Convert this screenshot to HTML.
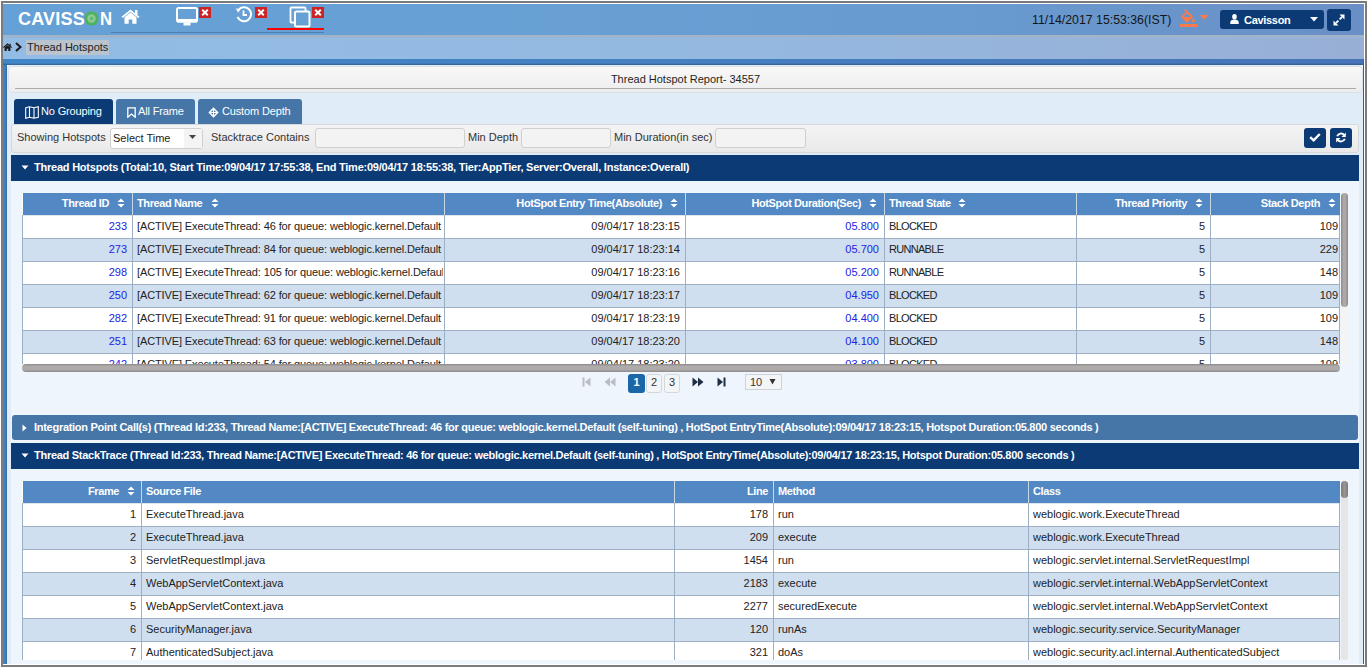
<!DOCTYPE html>
<html><head><meta charset="utf-8">
<style>
*{box-sizing:border-box;margin:0;padding:0}
html,body{width:1367px;height:667px;overflow:hidden;background:#fff;font-family:"Liberation Sans",sans-serif;font-size:11px;color:#222;position:relative}
div,span{position:absolute}
.t{white-space:nowrap}
/* frame */
#fr{left:1px;top:1px;width:1366px;height:666px;border:2px solid #7c7c7c;border-top-color:#7a7a7a}
#hdr{left:3px;top:4px;width:1361px;height:31px;background:linear-gradient(90deg,#65a0d6 0%,#68a0d4 40%,#689bd0 70%,#6a8fc6 100%)}
#hl{left:111px;top:32px;width:213px;height:1px;background:#4d7fb2}
#bct{left:3px;top:35px;width:1361px;height:3px;background:linear-gradient(#a6b3c0,#98b6d8)}
#bc{left:3px;top:38px;width:1361px;height:21px;background:linear-gradient(90deg,#92bce5 0%,#94b9e1 50%,#98afd5 100%)}
#strip{left:3px;top:59px;width:1361px;height:6px;background:linear-gradient(transparent 0,transparent 4px,rgba(40,70,100,.6) 6px),linear-gradient(90deg,#3f86c9,#4580c2 50%,#4774b8)}
#lb{left:3px;top:65px;width:4px;height:599px;background:linear-gradient(90deg,#4a86c4 0,#3f7fc0 60%,#34679c 100%)}
#rb{left:1363px;top:59px;width:1px;height:605px;background:#3a5f8f}
#panel{left:7px;top:65px;width:1356px;height:599px;background:#e0ecf8;border-radius:3px 3px 0 0}
#inner{left:11px;top:181px;width:1348px;height:483px;background:#eff5fd}
#ttl{left:9px;top:67px;width:1353px;height:25px;background:linear-gradient(#f8f8f8,#ededed);border-radius:4px;box-shadow:0 0 0 1px #d9e2ea}
#ttl .line{left:6px;top:21px;width:1341px;height:1px;background:#ababab}
#ttl .t{left:3px;width:1347px;top:6px;text-align:center;color:#1f1f1f}
/* tabs */
.tab{top:99px;height:25px;background:#4676a8;color:#fff;border-radius:3px 3px 0 0;font-size:11px;letter-spacing:-0.15px}
.tab .t{top:6px}
/* filter */
#flt{left:11px;top:124px;width:1348px;height:29px;background:linear-gradient(#f4f4f4,#e9e9e9);border:1px solid #d4d8dc;border-radius:3px}
.lbl{top:131px;color:#333}
.inp{top:128px;height:20px;background:#f3f3f3;border:1px solid #cfcfcf;border-radius:3px}
.btn{top:128px;width:22px;height:20px;background:#0b3a75;border-radius:3px}
/* section bars */
.sec{left:11px;width:1348px;height:26px;background:#0b3a75;color:#fff;font-weight:bold;font-size:11px;letter-spacing:-0.28px}
.sec .t{left:23px;top:6px}
.tri{width:0;height:0}
/* tables */
.hd{height:22px;background:#5288c3;color:#fff;font-weight:bold;letter-spacing:-0.35px}
.hd .t{top:4px}
.row{height:23px;left:23px;border-bottom:1px solid #9fb1c4}
.ev{background:#fff}
.od{background:#cfdff0}
.vl{width:1px;background:#9fb1c4}
.lnk{color:#2a2ad6}
.c .t{top:5px}
.ht{color:#fff;font-weight:bold;letter-spacing:-0.4px}
</style></head>
<body>
<div id="fr"></div>
<div id="hdr"></div>
<div id="hl"></div>
<div id="bct"></div>
<div id="bc"></div>
<div id="strip"></div>
<div id="panel"></div>
<div id="lb"></div>
<div id="rb"></div>
<div id="inner"></div>

<!-- header content -->
<div class="t" style="left:18px;top:9px;font-size:19px;font-weight:bold;color:#fff;letter-spacing:0.2px;line-height:19px;transform:scaleX(0.95);transform-origin:0 0">CAVISS</div>
<div class="t" style="left:100px;top:9px;font-size:19px;font-weight:bold;color:#fff;line-height:19px;transform:scaleX(0.88);transform-origin:0 0">N</div>
<svg style="position:absolute;left:84px;top:11px" width="15" height="15" viewBox="0 0 15 15"><circle cx="7.5" cy="7.5" r="7" fill="#4cb35b"/><circle cx="7.5" cy="7.5" r="4.2" fill="#8ccb95"/><path d="M7.5 5.3 L9.7 7.5 L7.5 9.7 L5.3 7.5Z" fill="#5dbb6a"/></svg>
<!-- home -->
<svg style="position:absolute;left:121px;top:9px" width="19" height="15" viewBox="0 0 19 15"><path d="M0.5 7.8 L9.5 0.5 L14 4.2 L14 1 L16.5 1 L16.5 6.2 L18.5 7.8 L17.3 9 L9.5 2.7 L1.7 9Z" fill="#fff"/><path d="M3.5 8.3 L9.5 3.6 L15.5 8.3 L15.5 14.7 L11.3 14.7 L11.3 10.5 L7.7 10.5 L7.7 14.7 L3.5 14.7Z" fill="#fff"/></svg>
<!-- monitor -->
<svg style="position:absolute;left:176px;top:7px" width="23" height="19" viewBox="0 0 23 19"><rect x="1" y="1" width="20" height="13.5" rx="1.5" fill="none" stroke="#fff" stroke-width="2"/><rect x="1" y="12" width="20" height="3.5" fill="#fff"/><rect x="7.5" y="15.5" width="7" height="3" fill="#fff"/></svg>
<div style="left:199px;top:7px;width:12px;height:11px;background:#cc2424"></div>
<svg style="position:absolute;left:199px;top:7px" width="12" height="11" viewBox="0 0 12 11"><path d="M3.2 2.7 L8.8 8.3 M8.8 2.7 L3.2 8.3" stroke="#fff" stroke-width="2"/></svg>
<!-- history -->
<svg style="position:absolute;left:235px;top:6px" width="18" height="17" viewBox="0 0 18 17"><path d="M3.2 4.5 A7 7 0 1 1 2.6 11" fill="none" stroke="#fff" stroke-width="2"/><path d="M0.8 2.5 L5.5 3 L3.2 6.8Z" fill="#fff"/><path d="M8.5 4.5 L8.5 9 L12 9" fill="none" stroke="#fff" stroke-width="1.8"/></svg>
<div style="left:255px;top:7px;width:12px;height:11px;background:#cc2424"></div>
<svg style="position:absolute;left:255px;top:7px" width="12" height="11" viewBox="0 0 12 11"><path d="M3.2 2.7 L8.8 8.3 M8.8 2.7 L3.2 8.3" stroke="#fff" stroke-width="2"/></svg>
<!-- copy -->
<svg style="position:absolute;left:289px;top:6px" width="23" height="22" viewBox="0 0 23 22"><path d="M5 16.5 L2.5 16.5 Q1.5 16.5 1.5 15.5 L1.5 2.5 Q1.5 1.5 2.5 1.5 L15.5 1.5 Q16.5 1.5 16.5 2.5 L16.5 5" fill="none" stroke="#fff" stroke-width="1.8"/><rect x="6" y="5.5" width="14.5" height="15" rx="1.5" fill="none" stroke="#fff" stroke-width="2"/></svg>
<div style="left:312px;top:7px;width:12px;height:11px;background:#cc2424"></div>
<svg style="position:absolute;left:312px;top:7px" width="12" height="11" viewBox="0 0 12 11"><path d="M3.2 2.7 L8.8 8.3 M8.8 2.7 L3.2 8.3" stroke="#fff" stroke-width="2"/></svg>
<div style="left:267px;top:28px;width:57px;height:2px;background:#f00"></div>
<!-- date -->
<div class="t" style="left:1032px;top:13px;font-size:12.3px;color:#151515">11/14/2017 15:53:36(IST)</div>
<!-- paint -->
<svg style="position:absolute;left:1179px;top:9px" width="31" height="19" viewBox="0 0 31 19"><path d="M2.9 7.9 L7.7 3.1 L13 7.9 L7.7 12.8 Z" fill="none" stroke="#fb7a48" stroke-width="1.5" stroke-linejoin="miter"/><path d="M2.9 7.9 L13 7.9 L7.7 12.8Z" fill="#fb7a48"/><path d="M5.6 1.8 L6.4 1 L13.2 7.8" fill="none" stroke="#fb7a48" stroke-width="1.4"/><path d="M14.4 9.3 Q16 11 16 11.8 A1.6 1.6 0 0 1 12.8 11.8 Q12.8 11 14.4 9.3Z" fill="#fb7a48"/><rect x="1" y="15" width="17.5" height="3" fill="#fb7a48"/><path d="M21 6 L29.5 6 L25.2 10.8Z" fill="#fb7a48"/></svg>
<!-- user btn -->
<div style="left:1220px;top:10px;width:104px;height:19px;background:#0b3a75;border-radius:3px"></div>
<svg style="position:absolute;left:1230px;top:14px" width="9" height="10" viewBox="0 0 9 10"><ellipse cx="4.5" cy="2.8" rx="2.3" ry="2.8" fill="#fff"/><path d="M0.3 10 L0.3 8 Q0.5 5.9 2.8 5.7 L6.2 5.7 Q8.5 5.9 8.7 8 L8.7 10Z" fill="#fff"/></svg>
<div class="t" style="left:1244px;top:14px;font-weight:bold;color:#fff;letter-spacing:-0.3px;font-size:11px">Cavisson</div>
<svg style="position:absolute;left:1310px;top:17px" width="8" height="5" viewBox="0 0 8 5"><path d="M0 0 L8 0 L4 4.5Z" fill="#fff"/></svg>
<div style="left:1327px;top:9px;width:24px;height:22px;background:#0b3a75;border-radius:3px"></div>
<svg style="position:absolute;left:1333px;top:14px" width="12" height="12" viewBox="0 0 12 12"><path d="M6.5 0.5 L11.5 0.5 L11.5 5.5 Z M0.5 6.5 L0.5 11.5 L5.5 11.5Z" fill="#fff"/><path d="M9 3 L6.6 5.4 M5.4 6.6 L3 9" stroke="#fff" stroke-width="1.8"/></svg>
<!-- breadcrumb icons -->
<svg style="position:absolute;left:3px;top:43px" width="9" height="8" viewBox="0 0 9 8"><path d="M0 4.2 L4.5 0.3 L6.5 2 L6.5 0.7 L7.7 0.7 L7.7 3 L9 4.2 L8.3 4.9 L4.5 1.7 L0.7 4.9Z M1.6 4.5 L4.5 2.2 L7.4 4.5 L7.4 8 L5.3 8 L5.3 5.8 L3.7 5.8 L3.7 8 L1.6 8Z" fill="#1a1a1a"/></svg>
<svg style="position:absolute;left:15px;top:42px" width="7" height="10" viewBox="0 0 7 10"><path d="M1 1 L5.5 5 L1 9" fill="none" stroke="#1a1a1a" stroke-width="2"/></svg>
<!-- title -->
<div id="ttl"><div class="line"></div><div class="t">Thread Hotspot Report- 34557</div></div>

<!-- breadcrumb -->
<div style="left:26px;top:40px;width:83px;height:15px;background:#b9c4cf"></div>
<div class="t" style="left:27px;top:41px;color:#222">Thread Hotspots</div>

<!-- tabs -->
<div class="tab" style="left:14px;width:99px;background:#0b3a75"><span class="t" style="left:27px">No Grouping</span><svg style="position:absolute;left:11px;top:7px" width="14" height="13" viewBox="0 0 14 13"><path d="M0.7 1.8 L4.5 0.7 L9 1.8 L13.3 0.7 L13.3 11.2 L9 12.3 L4.5 11.2 L0.7 12.3Z M4.5 0.7 L4.5 11.2 M9 1.8 L9 12.3" fill="none" stroke="#fff" stroke-width="1.1"/></svg></div>
<div class="tab" style="left:116px;width:79px"><span class="t" style="left:22px">All Frame</span><svg style="position:absolute;left:11px;top:8px" width="9" height="11" viewBox="0 0 9 11"><path d="M0.8 0.8 L8.2 0.8 L8.2 10.2 L4.5 7 L0.8 10.2Z" fill="none" stroke="#fff" stroke-width="1.3" stroke-linejoin="miter"/></svg></div>
<div class="tab" style="left:198px;width:104px"><span class="t" style="left:24px">Custom Depth</span><svg style="position:absolute;left:10px;top:8px" width="11" height="11" viewBox="0 0 11 11"><path d="M5.5 0.3 L10.7 5.5 L5.5 10.7 L0.3 5.5Z" fill="#fff"/><circle cx="5.5" cy="5.5" r="2.3" fill="#4676a8"/><path d="M5.5 1.5 V9.5 M1.5 5.5 H9.5" stroke="#fff" stroke-width="1"/></svg></div>

<!-- filter -->
<div id="flt"></div>
<div class="lbl t" style="left:17px">Showing Hotspots</div>
<div class="inp" style="left:110px;width:93px;height:21px;background:#fff"></div>
<div style="left:184px;top:129px;width:18px;height:19px;background:#f4f4f4"></div><div class="t" style="left:113px;top:132px;color:#222">Select Time</div><svg style="position:absolute;left:189px;top:135px" width="7" height="4" viewBox="0 0 7 4"><path d="M0 0 L7 0 L3.5 4Z" fill="#444"/></svg>
<div class="lbl t" style="left:211px">Stacktrace Contains</div>
<div class="inp" style="left:315px;width:150px"></div>
<div class="lbl t" style="left:468px">Min Depth</div>
<div class="inp" style="left:521px;width:90px"></div>
<div class="lbl t" style="left:614px">Min Duration(in sec)</div>
<div class="inp" style="left:715px;width:91px"></div>
<div class="btn" style="left:1304px"></div><svg style="position:absolute;left:1309px;top:133px" width="12" height="9" viewBox="0 0 12 9"><path d="M1.2 4.2 L4.6 7.3 L10.8 1" fill="none" stroke="#fff" stroke-width="2.4"/></svg>
<div class="btn" style="left:1330px"></div><svg style="position:absolute;left:1335px;top:132px" width="12" height="11" viewBox="0 0 12 11"><path d="M2.2 4.3 A4 4 0 0 1 9.3 3.3" fill="none" stroke="#fff" stroke-width="1.9"/><path d="M10.8 0.5 L10.8 5 L6.5 5Z" fill="#fff"/><path d="M9.8 6.7 A4 4 0 0 1 2.7 7.7" fill="none" stroke="#fff" stroke-width="1.9"/><path d="M1.2 10.5 L1.2 6 L5.5 6Z" fill="#fff"/></svg>

<!-- section 1 -->
<div class="sec" style="top:155px;letter-spacing:-0.225px"><svg style="position:absolute;left:10px;top:10px" width="8" height="5" viewBox="0 0 8 5"><path d="M0.5 0.5 L7.5 0.5 L4 4.5Z" fill="#fff"/></svg><span class="t">Thread Hotspots (Total:10, Start Time:09/04/17 17:55:38, End Time:09/04/17 18:55:38, Tier:AppTier, Server:Overall, Instance:Overall)</span></div>

<!-- pagination -->
<svg style="position:absolute;left:582px;top:377px" width="9" height="10" viewBox="0 0 9 10"><rect x="0.5" y="0.5" width="2" height="9" fill="#b9bec4"/><path d="M8.5 0.5 L3 5 L8.5 9.5Z" fill="#b9bec4"/></svg>
<svg style="position:absolute;left:604px;top:377px" width="12" height="10" viewBox="0 0 12 10"><path d="M6 0.5 L0.5 5 L6 9.5Z M11.5 0.5 L6 5 L11.5 9.5Z" fill="#b9bec4"/></svg>
<div style="left:628px;top:374px;width:17px;height:19px;background:#1b66a6;border-radius:3px"></div>
<div class="t" style="left:628px;top:376px;width:17px;text-align:center;color:#fff;font-size:11px;font-weight:bold">1</div>
<div style="left:646px;top:374px;width:16px;height:19px;background:#f4f5f7;border:1px solid #d4d8dd;border-radius:3px"></div>
<div class="t" style="left:646px;top:376px;width:16px;text-align:center;color:#333;font-size:11px">2</div>
<div style="left:664px;top:374px;width:16px;height:19px;background:#f4f5f7;border:1px solid #d4d8dd;border-radius:3px"></div>
<div class="t" style="left:664px;top:376px;width:16px;text-align:center;color:#333;font-size:11px">3</div>
<svg style="position:absolute;left:692px;top:377px" width="12" height="10" viewBox="0 0 12 10"><path d="M0.5 0.5 L6 5 L0.5 9.5Z M6 0.5 L11.5 5 L6 9.5Z" fill="#1e2e44"/></svg>
<svg style="position:absolute;left:717px;top:377px" width="9" height="10" viewBox="0 0 9 10"><path d="M0.5 0.5 L6 5 L0.5 9.5Z" fill="#1e2e44"/><rect x="6.5" y="0.5" width="2" height="9" fill="#1e2e44"/></svg>
<div style="left:745px;top:374px;width:37px;height:16px;background:#f4f5f7;border:1px solid #cfd3d8"></div>
<div class="t" style="left:750px;top:376px;color:#333;font-size:11px">10</div>
<svg style="position:absolute;left:769px;top:379px" width="7" height="6" viewBox="0 0 7 6"><path d="M0.5 0 L6.5 0 L3.5 5.5Z" fill="#333"/></svg>
<!-- section 2/3 -->
<div class="sec" style="top:415px;left:12px;width:1346px;height:25px;background:#4676a8;border-radius:3px"><svg style="position:absolute;left:10px;top:9px" width="5" height="8" viewBox="0 0 5 8"><path d="M0.5 0.5 L4.5 4 L0.5 7.5Z" fill="#fff"/></svg><span class="t" style="left:22px">Integration Point Call(s) (Thread Id:233, Thread Name:[ACTIVE] ExecuteThread: 46 for queue: weblogic.kernel.Default (self-tuning) , HotSpot EntryTime(Absolute):09/04/17 18:23:15, Hotspot Duration:05.800 seconds )</span></div>
<div class="sec" style="top:443px"><svg style="position:absolute;left:10px;top:10px" width="8" height="5" viewBox="0 0 8 5"><path d="M0.5 0.5 L7.5 0.5 L4 4.5Z" fill="#fff"/></svg><span class="t">Thread StackTrace (Thread Id:233, Thread Name:[ACTIVE] ExecuteThread: 46 for queue: weblogic.kernel.Default (self-tuning) , HotSpot EntryTime(Absolute):09/04/17 18:23:15, Hotspot Duration:05.800 seconds )</span></div>

<!-- table1 -->
<div style="left:22px;top:193px;width:1318px;height:171px;overflow:hidden;background:#fff">
<div class="hd" style="left:1px;top:0;width:1317px"></div>
<div class="t ht" style="right:1231px;top:4px">Thread ID</div>
<div class="t ht" style="left:115px;top:4px">Thread Name</div>
<div class="t ht" style="right:678px;top:4px">HotSpot Entry Time(Absolute)</div>
<div class="t ht" style="right:479px;top:4px">HotSpot Duration(Sec)</div>
<div class="t ht" style="left:867px;top:4px">Thread State</div>
<div class="t ht" style="right:153px;top:4px">Thread Priority</div>
<div class="t ht" style="right:20px;top:4px">Stack Depth</div>
<div style="left:110px;top:0;width:1px;height:22px;background:#c9d6e3"></div>
<div style="left:422px;top:0;width:1px;height:22px;background:#c9d6e3"></div>
<div style="left:663px;top:0;width:1px;height:22px;background:#c9d6e3"></div>
<div style="left:862px;top:0;width:1px;height:22px;background:#c9d6e3"></div>
<div style="left:1054px;top:0;width:1px;height:22px;background:#c9d6e3"></div>
<div style="left:1188px;top:0;width:1px;height:22px;background:#c9d6e3"></div>
<svg style="position:absolute;left:95px;top:5px" width="8" height="10" viewBox="0 0 8 10"><path d="M0.5 4 L4 0.5 L7.5 4 Z M0.5 6 L4 9.5 L7.5 6 Z" fill="#fff"/></svg>
<svg style="position:absolute;left:189px;top:5px" width="8" height="10" viewBox="0 0 8 10"><path d="M0.5 4 L4 0.5 L7.5 4 Z M0.5 6 L4 9.5 L7.5 6 Z" fill="#fff"/></svg>
<svg style="position:absolute;left:648px;top:5px" width="8" height="10" viewBox="0 0 8 10"><path d="M0.5 4 L4 0.5 L7.5 4 Z M0.5 6 L4 9.5 L7.5 6 Z" fill="#fff"/></svg>
<svg style="position:absolute;left:847px;top:5px" width="8" height="10" viewBox="0 0 8 10"><path d="M0.5 4 L4 0.5 L7.5 4 Z M0.5 6 L4 9.5 L7.5 6 Z" fill="#fff"/></svg>
<svg style="position:absolute;left:936px;top:5px" width="8" height="10" viewBox="0 0 8 10"><path d="M0.5 4 L4 0.5 L7.5 4 Z M0.5 6 L4 9.5 L7.5 6 Z" fill="#fff"/></svg>
<svg style="position:absolute;left:1173px;top:5px" width="8" height="10" viewBox="0 0 8 10"><path d="M0.5 4 L4 0.5 L7.5 4 Z M0.5 6 L4 9.5 L7.5 6 Z" fill="#fff"/></svg>
<svg style="position:absolute;left:1306px;top:5px" width="8" height="10" viewBox="0 0 8 10"><path d="M0.5 4 L4 0.5 L7.5 4 Z M0.5 6 L4 9.5 L7.5 6 Z" fill="#fff"/></svg>
<div style="left:0;top:22px;width:1318px;height:1px;background:#dfe6ee"></div>
<div style="left:0;top:23px;width:1318px;height:23px;background:#ffffff;border-bottom:1px solid #9db0c3"></div>
<div class="t" style="left:1px;width:104px;top:27px;text-align:right;color:#2222e0;overflow:hidden">233</div>
<div class="t" style="left:115px;width:306px;top:27px;color:#222;overflow:hidden;letter-spacing:-0.12px;">[ACTIVE] ExecuteThread: 46 for queue: weblogic.kernel.Default (self-tuning)</div>
<div class="t" style="left:423px;width:235px;top:27px;text-align:right;color:#222;overflow:hidden">09/04/17 18:23:15</div>
<div class="t" style="left:664px;width:193px;top:27px;text-align:right;color:#2222e0;overflow:hidden">05.800</div>
<div class="t" style="left:867px;width:186px;top:27px;color:#222;overflow:hidden;letter-spacing:-0.7px;">BLOCKED</div>
<div class="t" style="left:1055px;width:128px;top:27px;text-align:right;color:#222;overflow:hidden">5</div>
<div class="t" style="left:1189px;width:127px;top:27px;text-align:right;color:#222;overflow:hidden">109</div>
<div style="left:0;top:46px;width:1318px;height:23px;background:#cfdff0;border-bottom:1px solid #9db0c3"></div>
<div class="t" style="left:1px;width:104px;top:50px;text-align:right;color:#2222e0;overflow:hidden">273</div>
<div class="t" style="left:115px;width:306px;top:50px;color:#222;overflow:hidden;letter-spacing:-0.12px;">[ACTIVE] ExecuteThread: 84 for queue: weblogic.kernel.Default (self-tuning)</div>
<div class="t" style="left:423px;width:235px;top:50px;text-align:right;color:#222;overflow:hidden">09/04/17 18:23:14</div>
<div class="t" style="left:664px;width:193px;top:50px;text-align:right;color:#2222e0;overflow:hidden">05.700</div>
<div class="t" style="left:867px;width:186px;top:50px;color:#222;overflow:hidden;letter-spacing:-0.7px;">RUNNABLE</div>
<div class="t" style="left:1055px;width:128px;top:50px;text-align:right;color:#222;overflow:hidden">5</div>
<div class="t" style="left:1189px;width:127px;top:50px;text-align:right;color:#222;overflow:hidden">229</div>
<div style="left:0;top:69px;width:1318px;height:23px;background:#ffffff;border-bottom:1px solid #9db0c3"></div>
<div class="t" style="left:1px;width:104px;top:73px;text-align:right;color:#2222e0;overflow:hidden">298</div>
<div class="t" style="left:115px;width:306px;top:73px;color:#222;overflow:hidden;letter-spacing:-0.12px;">[ACTIVE] ExecuteThread: 105 for queue: weblogic.kernel.Default (self-tuning)</div>
<div class="t" style="left:423px;width:235px;top:73px;text-align:right;color:#222;overflow:hidden">09/04/17 18:23:16</div>
<div class="t" style="left:664px;width:193px;top:73px;text-align:right;color:#2222e0;overflow:hidden">05.200</div>
<div class="t" style="left:867px;width:186px;top:73px;color:#222;overflow:hidden;letter-spacing:-0.7px;">RUNNABLE</div>
<div class="t" style="left:1055px;width:128px;top:73px;text-align:right;color:#222;overflow:hidden">5</div>
<div class="t" style="left:1189px;width:127px;top:73px;text-align:right;color:#222;overflow:hidden">148</div>
<div style="left:0;top:92px;width:1318px;height:23px;background:#cfdff0;border-bottom:1px solid #9db0c3"></div>
<div class="t" style="left:1px;width:104px;top:96px;text-align:right;color:#2222e0;overflow:hidden">250</div>
<div class="t" style="left:115px;width:306px;top:96px;color:#222;overflow:hidden;letter-spacing:-0.12px;">[ACTIVE] ExecuteThread: 62 for queue: weblogic.kernel.Default (self-tuning)</div>
<div class="t" style="left:423px;width:235px;top:96px;text-align:right;color:#222;overflow:hidden">09/04/17 18:23:17</div>
<div class="t" style="left:664px;width:193px;top:96px;text-align:right;color:#2222e0;overflow:hidden">04.950</div>
<div class="t" style="left:867px;width:186px;top:96px;color:#222;overflow:hidden;letter-spacing:-0.7px;">BLOCKED</div>
<div class="t" style="left:1055px;width:128px;top:96px;text-align:right;color:#222;overflow:hidden">5</div>
<div class="t" style="left:1189px;width:127px;top:96px;text-align:right;color:#222;overflow:hidden">109</div>
<div style="left:0;top:115px;width:1318px;height:23px;background:#ffffff;border-bottom:1px solid #9db0c3"></div>
<div class="t" style="left:1px;width:104px;top:119px;text-align:right;color:#2222e0;overflow:hidden">282</div>
<div class="t" style="left:115px;width:306px;top:119px;color:#222;overflow:hidden;letter-spacing:-0.12px;">[ACTIVE] ExecuteThread: 91 for queue: weblogic.kernel.Default (self-tuning)</div>
<div class="t" style="left:423px;width:235px;top:119px;text-align:right;color:#222;overflow:hidden">09/04/17 18:23:19</div>
<div class="t" style="left:664px;width:193px;top:119px;text-align:right;color:#2222e0;overflow:hidden">04.400</div>
<div class="t" style="left:867px;width:186px;top:119px;color:#222;overflow:hidden;letter-spacing:-0.7px;">BLOCKED</div>
<div class="t" style="left:1055px;width:128px;top:119px;text-align:right;color:#222;overflow:hidden">5</div>
<div class="t" style="left:1189px;width:127px;top:119px;text-align:right;color:#222;overflow:hidden">109</div>
<div style="left:0;top:138px;width:1318px;height:23px;background:#cfdff0;border-bottom:1px solid #9db0c3"></div>
<div class="t" style="left:1px;width:104px;top:142px;text-align:right;color:#2222e0;overflow:hidden">251</div>
<div class="t" style="left:115px;width:306px;top:142px;color:#222;overflow:hidden;letter-spacing:-0.12px;">[ACTIVE] ExecuteThread: 63 for queue: weblogic.kernel.Default (self-tuning)</div>
<div class="t" style="left:423px;width:235px;top:142px;text-align:right;color:#222;overflow:hidden">09/04/17 18:23:20</div>
<div class="t" style="left:664px;width:193px;top:142px;text-align:right;color:#2222e0;overflow:hidden">04.100</div>
<div class="t" style="left:867px;width:186px;top:142px;color:#222;overflow:hidden;letter-spacing:-0.7px;">BLOCKED</div>
<div class="t" style="left:1055px;width:128px;top:142px;text-align:right;color:#222;overflow:hidden">5</div>
<div class="t" style="left:1189px;width:127px;top:142px;text-align:right;color:#222;overflow:hidden">148</div>
<div style="left:0;top:161px;width:1318px;height:23px;background:#ffffff;border-bottom:1px solid #9db0c3"></div>
<div class="t" style="left:1px;width:104px;top:165px;text-align:right;color:#2222e0;overflow:hidden">242</div>
<div class="t" style="left:115px;width:306px;top:165px;color:#222;overflow:hidden;letter-spacing:-0.12px;">[ACTIVE] ExecuteThread: 54 for queue: weblogic.kernel.Default (self-tuning)</div>
<div class="t" style="left:423px;width:235px;top:165px;text-align:right;color:#222;overflow:hidden">09/04/17 18:23:20</div>
<div class="t" style="left:664px;width:193px;top:165px;text-align:right;color:#2222e0;overflow:hidden">03.800</div>
<div class="t" style="left:867px;width:186px;top:165px;color:#222;overflow:hidden;letter-spacing:-0.7px;">BLOCKED</div>
<div class="t" style="left:1055px;width:128px;top:165px;text-align:right;color:#222;overflow:hidden">5</div>
<div class="t" style="left:1189px;width:127px;top:165px;text-align:right;color:#222;overflow:hidden">109</div>
<div style="left:0px;top:22px;width:1px;height:171px;background:#9db0c3"></div>
<div style="left:110px;top:22px;width:1px;height:171px;background:#9db0c3"></div>
<div style="left:422px;top:22px;width:1px;height:171px;background:#9db0c3"></div>
<div style="left:663px;top:22px;width:1px;height:171px;background:#9db0c3"></div>
<div style="left:862px;top:22px;width:1px;height:171px;background:#9db0c3"></div>
<div style="left:1054px;top:22px;width:1px;height:171px;background:#9db0c3"></div>
<div style="left:1188px;top:22px;width:1px;height:171px;background:#9db0c3"></div>
<div style="left:1317px;top:22px;width:1px;height:171px;background:#9db0c3"></div>
</div>
<div style="left:22px;top:364px;width:1318px;height:8px;border-radius:4px;background:linear-gradient(#8f8a8a,#b0acac 30%,#aeaaaa 70%,#8f8a8a)"></div>
<div style="left:1341px;top:193px;width:7px;height:171px;background:#f4f4f4;border-radius:3px"></div>
<div style="left:1341px;top:193px;width:7px;height:114px;border-radius:3.5px;background:linear-gradient(90deg,#8f8a8a,#b0acac 40%,#aeaaaa 60%,#8f8a8a)"></div>
<!-- table2 -->
<div style="left:22px;top:481px;width:1318px;height:179px;overflow:hidden;background:#fff">
<div class="hd" style="left:1px;top:0;width:1317px"></div>
<div class="t ht" style="right:1221px;top:4px">Frame</div>
<div class="t ht" style="left:124px;top:4px">Source File</div>
<div class="t ht" style="right:572px;top:4px">Line</div>
<div class="t ht" style="left:756px;top:4px">Method</div>
<div class="t ht" style="left:1011px;top:4px">Class</div>
<div style="left:119px;top:0;width:1px;height:22px;background:#c9d6e3"></div>
<div style="left:652px;top:0;width:1px;height:22px;background:#c9d6e3"></div>
<div style="left:751px;top:0;width:1px;height:22px;background:#c9d6e3"></div>
<div style="left:1006px;top:0;width:1px;height:22px;background:#c9d6e3"></div>
<svg style="position:absolute;left:105px;top:5px" width="8" height="10" viewBox="0 0 8 10"><path d="M0.5 4 L4 0.5 L7.5 4 Z M0.5 6 L4 9.5 L7.5 6 Z" fill="#fff"/></svg>
<div style="left:0;top:22px;width:1318px;height:1px;background:#dfe6ee"></div>
<div style="left:0;top:23px;width:1318px;height:23px;background:#ffffff;border-bottom:1px solid #9db0c3"></div>
<div class="t" style="left:1px;width:113px;top:27px;text-align:right;color:#222;overflow:hidden">1</div>
<div class="t" style="left:124px;width:527px;top:27px;color:#222;overflow:hidden;">ExecuteThread.java</div>
<div class="t" style="left:653px;width:93px;top:27px;text-align:right;color:#222;overflow:hidden">178</div>
<div class="t" style="left:756px;width:249px;top:27px;color:#222;overflow:hidden;">run</div>
<div class="t" style="left:1011px;width:306px;top:27px;color:#222;overflow:hidden;">weblogic.work.ExecuteThread</div>
<div style="left:0;top:46px;width:1318px;height:23px;background:#cfdff0;border-bottom:1px solid #9db0c3"></div>
<div class="t" style="left:1px;width:113px;top:50px;text-align:right;color:#222;overflow:hidden">2</div>
<div class="t" style="left:124px;width:527px;top:50px;color:#222;overflow:hidden;">ExecuteThread.java</div>
<div class="t" style="left:653px;width:93px;top:50px;text-align:right;color:#222;overflow:hidden">209</div>
<div class="t" style="left:756px;width:249px;top:50px;color:#222;overflow:hidden;">execute</div>
<div class="t" style="left:1011px;width:306px;top:50px;color:#222;overflow:hidden;">weblogic.work.ExecuteThread</div>
<div style="left:0;top:69px;width:1318px;height:23px;background:#ffffff;border-bottom:1px solid #9db0c3"></div>
<div class="t" style="left:1px;width:113px;top:73px;text-align:right;color:#222;overflow:hidden">3</div>
<div class="t" style="left:124px;width:527px;top:73px;color:#222;overflow:hidden;">ServletRequestImpl.java</div>
<div class="t" style="left:653px;width:93px;top:73px;text-align:right;color:#222;overflow:hidden">1454</div>
<div class="t" style="left:756px;width:249px;top:73px;color:#222;overflow:hidden;">run</div>
<div class="t" style="left:1011px;width:306px;top:73px;color:#222;overflow:hidden;">weblogic.servlet.internal.ServletRequestImpl</div>
<div style="left:0;top:92px;width:1318px;height:23px;background:#cfdff0;border-bottom:1px solid #9db0c3"></div>
<div class="t" style="left:1px;width:113px;top:96px;text-align:right;color:#222;overflow:hidden">4</div>
<div class="t" style="left:124px;width:527px;top:96px;color:#222;overflow:hidden;">WebAppServletContext.java</div>
<div class="t" style="left:653px;width:93px;top:96px;text-align:right;color:#222;overflow:hidden">2183</div>
<div class="t" style="left:756px;width:249px;top:96px;color:#222;overflow:hidden;">execute</div>
<div class="t" style="left:1011px;width:306px;top:96px;color:#222;overflow:hidden;">weblogic.servlet.internal.WebAppServletContext</div>
<div style="left:0;top:115px;width:1318px;height:23px;background:#ffffff;border-bottom:1px solid #9db0c3"></div>
<div class="t" style="left:1px;width:113px;top:119px;text-align:right;color:#222;overflow:hidden">5</div>
<div class="t" style="left:124px;width:527px;top:119px;color:#222;overflow:hidden;">WebAppServletContext.java</div>
<div class="t" style="left:653px;width:93px;top:119px;text-align:right;color:#222;overflow:hidden">2277</div>
<div class="t" style="left:756px;width:249px;top:119px;color:#222;overflow:hidden;">securedExecute</div>
<div class="t" style="left:1011px;width:306px;top:119px;color:#222;overflow:hidden;">weblogic.servlet.internal.WebAppServletContext</div>
<div style="left:0;top:138px;width:1318px;height:23px;background:#cfdff0;border-bottom:1px solid #9db0c3"></div>
<div class="t" style="left:1px;width:113px;top:142px;text-align:right;color:#222;overflow:hidden">6</div>
<div class="t" style="left:124px;width:527px;top:142px;color:#222;overflow:hidden;">SecurityManager.java</div>
<div class="t" style="left:653px;width:93px;top:142px;text-align:right;color:#222;overflow:hidden">120</div>
<div class="t" style="left:756px;width:249px;top:142px;color:#222;overflow:hidden;">runAs</div>
<div class="t" style="left:1011px;width:306px;top:142px;color:#222;overflow:hidden;">weblogic.security.service.SecurityManager</div>
<div style="left:0;top:161px;width:1318px;height:23px;background:#ffffff;border-bottom:1px solid #9db0c3"></div>
<div class="t" style="left:1px;width:113px;top:165px;text-align:right;color:#222;overflow:hidden">7</div>
<div class="t" style="left:124px;width:527px;top:165px;color:#222;overflow:hidden;">AuthenticatedSubject.java</div>
<div class="t" style="left:653px;width:93px;top:165px;text-align:right;color:#222;overflow:hidden">321</div>
<div class="t" style="left:756px;width:249px;top:165px;color:#222;overflow:hidden;">doAs</div>
<div class="t" style="left:1011px;width:306px;top:165px;color:#222;overflow:hidden;">weblogic.security.acl.internal.AuthenticatedSubject</div>
<div style="left:0px;top:22px;width:1px;height:179px;background:#9db0c3"></div>
<div style="left:119px;top:22px;width:1px;height:179px;background:#9db0c3"></div>
<div style="left:652px;top:22px;width:1px;height:179px;background:#9db0c3"></div>
<div style="left:751px;top:22px;width:1px;height:179px;background:#9db0c3"></div>
<div style="left:1006px;top:22px;width:1px;height:179px;background:#9db0c3"></div>
<div style="left:1317px;top:22px;width:1px;height:179px;background:#9db0c3"></div>
</div>
<div style="left:1341px;top:481px;width:7px;height:179px;background:#e6e6e6;border-radius:3.5px"></div>
<div style="left:1341px;top:481px;width:7px;height:17px;border-radius:3.5px;background:linear-gradient(90deg,#7f7b7b,#9a9696 50%,#7f7b7b)"></div>
</body></html>
